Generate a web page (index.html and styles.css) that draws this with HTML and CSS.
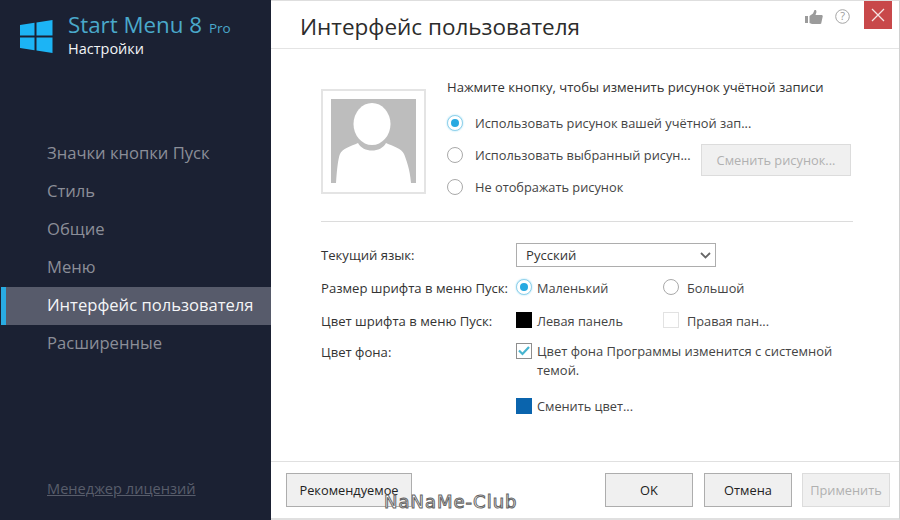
FILE: index.html
```html
<!DOCTYPE html>
<html lang="ru">
<head>
<meta charset="utf-8">
<title>Start Menu 8</title>
<link rel="stylesheet" href="styles.css">
</head>
<body>
<div class="app">
  <aside class="side">
    <div class="brand">
      <svg class="logo" width="33" height="33" viewBox="0 0 33 33"><path fill="#1cb4f5" d="M0 5 14.500 2.800V15.600H0ZM16.500 2.500 32.500 0V15.600H16.500ZM0 17.600H14.500V30.300L0 28.100ZM16.500 17.600H32.500V33L16.500 30.600Z"/></svg>
      <div class="brand-text">
        <div class="product">Start Menu 8<span class="pro">Pro</span></div>
        <div class="subtitle">Настройки</div>
      </div>
    </div>
    <nav class="nav">
      <div class="nav-item">Значки кнопки Пуск</div>
      <div class="nav-item">Стиль</div>
      <div class="nav-item">Общие</div>
      <div class="nav-item">Меню</div>
      <div class="nav-item active">Интерфейс пользователя</div>
      <div class="nav-item">Расширенные</div>
    </nav>
    <a class="license">Менеджер лицензий</a>
  </aside>
  <main class="main">
    <header class="head">
      <h1 class="title">Интерфейс пользователя</h1>
      <div class="tools">
        <svg width="18" height="14" viewBox="0 0 18 14"><path fill="#9b9b9b" d="M0 6h3v7H0ZM4.500 6 8 3.500 9.500 0h1.500l.5 2-1 3H17l.8 1-1.600 7.500-1 .5H7l-2.500-1Z"/></svg>
        <svg class="help" width="15" height="15" viewBox="0 0 15 15"><circle cx="7.500" cy="7.500" r="6.800" fill="none" stroke="#a5a5a5"/><text x="7.500" y="11.300" text-anchor="middle" class="help-mark">?</text></svg>
        <div class="close"><svg width="14" height="14" viewBox="0 0 14 14"><path stroke="#f6e4e4" stroke-width="1.300" d="M1 1 13 13M13 1 1 13"/></svg></div>
      </div>
    </header>
    <div class="body">
      <section class="picture">
        <div class="avatar">
          <svg width="85" height="84" viewBox="0 0 85 84"><rect width="85" height="84" fill="#bdbdbd"/><ellipse cx="41" cy="25" rx="18.500" ry="21" fill="#fff"/><path fill="#fff" d="M5 84C6 70 7 60 9 55 11 50 20 47 27 44 32 54 50 54 55 44 62 47 71 50 73 55 75 60 79 70 80 84Z"/></svg>
        </div>
        <div class="picture-opts">
          <p class="hint">Нажмите кнопку, чтобы изменить рисунок учётной записи</p>
          <div class="opt"><span class="radio on"></span>Использовать рисунок вашей учётной зап...</div>
          <div class="opt"><span class="radio"></span>Использовать выбранный рисун...<button class="btn change" disabled>Сменить рисунок...</button></div>
          <div class="opt"><span class="radio"></span>Не отображать рисунок</div>
        </div>
      </section>
      <hr class="sep">
      <section class="form">
        <div class="lbl row-lang">Текущий язык:</div>
        <div class="select row-lang"><span>Русский</span><svg width="11" height="7" viewBox="0 0 11 7"><path fill="none" stroke="#666" stroke-width="1.800" d="M1 1 5.500 5.500 10 1"/></svg></div>
        <div class="lbl row-size">Размер шрифта в меню Пуск:</div>
        <div class="pair row-size">
          <div class="cell"><span class="radio on"></span>Маленький</div>
          <div class="cell"><span class="radio"></span>Большой</div>
        </div>
        <div class="lbl row-color">Цвет шрифта в меню Пуск:</div>
        <div class="pair row-color">
          <div class="cell"><span class="swatch black"></span>Левая панель</div>
          <div class="cell"><span class="swatch blank"></span>Правая пан...</div>
        </div>
        <div class="lbl row-bg">Цвет фона:</div>
        <div class="bg row-bg">
          <div class="check-row">
            <span class="check"><svg width="12" height="10" viewBox="0 0 12 10"><path fill="none" stroke="#47b4cf" stroke-width="2.200" d="M1 4.500 4.500 8 11 1"/></svg></span>
            <span class="check-text">Цвет фона Программы изменится с системной темой.</span>
          </div>
          <div class="cell change-color"><span class="swatch blue"></span>Сменить цвет...</div>
        </div>
      </section>
    </div>
    <footer class="foot">
      <button class="btn recommended">Рекомендуемое</button>
      <div class="actions">
        <button class="btn">OK</button>
        <button class="btn">Отмена</button>
        <button class="btn" disabled>Применить</button>
      </div>
    </footer>
  </main>
  <div class="mark">NaNaMe-Club</div>
</div>
</body>
</html>
```
FILE: styles.css
```css
* { box-sizing: border-box; }
html, body { margin: 0; padding: 0; }
body { font-family: "Open Sans", "Noto Sans", sans-serif; background: #fff; color: #333; }
.app { position: relative; display: flex; width: 900px; height: 520px; overflow: hidden; }

.side { width: 271px; flex: none; background: #1b2133; display: flex; flex-direction: column; }
.brand { display: flex; gap: 15px; padding: 9px 0 0 20px; height: 135px; }
.logo { margin-top: 11px; }
.product { font-size: 22.300px; line-height: 31px; color: #4aa9cb; white-space: nowrap; }
.pro { font-size: 13.500px; margin-left: 7px; color: #4aa9cb; }
.subtitle { font-size: 14.500px; line-height: 14px; margin-top: -2px; color: #f2f4f6; }
.nav { display: flex; flex-direction: column; }
.nav-item { height: 38px; line-height: 35px; padding-left: 47px; font-size: 16.600px; color: #8b8e98; white-space: nowrap; }
.nav-item.active { margin-left: 1px; padding-left: 41px; border-left: 5px solid #29abe2; background: #575b6b; color: #f4f5f7; }
.license { margin-top: auto; margin-bottom: 21px; padding-left: 47px; font-size: 14.600px; line-height: 22px; color: #585d6b; text-decoration: underline; }

.main { flex: 1; display: flex; flex-direction: column; border-top: 1px solid #dedede; border-right: 1px solid #d0d0d0; border-bottom: 2px solid #e0e0e0; }
.head { height: 48px; flex: none; display: flex; justify-content: space-between; align-items: flex-start; padding-left: 29px; border-bottom: 1px solid #e4e4e4; }
.title { margin: 7px 0 0; font-size: 22.500px; line-height: 38px; font-weight: 400; color: #2c2c2c; }
.tools { display: flex; align-items: flex-start; padding-right: 7px; }
.tools svg { flex: none; }
.tools > svg:first-child { margin-top: 9px; }
.help { margin: 8px 14px 0 12px; }
.help-mark { font-size: 11px; fill: #9a9a9a; font-family: "Open Sans", sans-serif; }
.close { width: 28px; height: 28px; background: #c8484a; display: flex; align-items: center; justify-content: center; }

.body { flex: 1; padding: 0 46px 0 50px; }
.picture { display: flex; gap: 21px; padding-top: 26px; height: 172px; }
.avatar { width: 105px; height: 105px; margin-top: 14px; flex: none; border: 2px solid #e4e4e4; padding: 8px 0 0 8px; }
.avatar svg { display: block; }
.picture-opts { flex: 1; min-width: 0; }
.hint { margin: 0 0 8px; font-size: 13.070px; line-height: 24px; color: #333; white-space: nowrap; }
.opt { position: relative; display: flex; align-items: center; height: 32px; font-size: 12.800px; color: #444; white-space: nowrap; }
.radio { width: 16px; height: 16px; flex: none; margin-right: 12px; border: 1px solid #a9a9a9; border-radius: 50%; background: #fff; display: inline-flex; align-items: center; justify-content: center; }
.radio.on { border-color: #8fd0ea; box-shadow: 0 0 2px #9adcf5; }
.radio.on::after { content: ""; width: 8px; height: 8px; border-radius: 50%; background: #27a9e1; }
.btn { font-family: inherit; font-size: 12.800px; color: #222; background: #f0f0f0; border: 1px solid #adadad; width: 88px; height: 34px; padding: 0; }
.btn:disabled { color: #b0b0b0; border-color: #dcdcdc; background: #f0f0f0; }
.change { position: absolute; left: 254px; top: 5px; width: 150px; height: 32px; }
.sep { margin: 0; border: 0; border-top: 1px solid #dcdcdc; }

.form { display: grid; grid-template-columns: 195px 1fr; grid-template-rows: 24px 24px 24px auto; row-gap: 9px; padding-top: 21px; font-size: 13.100px; }
.lbl { white-space: nowrap; color: #333; display: flex; align-items: center; }
.select { width: 200px; height: 24px; border: 1px solid #adadad; display: flex; align-items: center; justify-content: space-between; padding: 0 4px 0 9px; color: #333; }
.row-lang { grid-row: 1; }
.row-size { grid-row: 2; }
.row-color { grid-row: 3; }
.row-bg { grid-row: 4; }
.lbl.row-bg { align-self: start; height: 19px; }
.pair { display: grid; grid-template-columns: 147px 1fr; }
.cell { display: flex; align-items: center; gap: 5px; white-space: nowrap; color: #444; font-size: 12.750px; }
.cell:last-child { gap: 8px; }
.change-color.cell { gap: 5px; margin-top: 17px; }
.cell .radio { margin-right: 0; margin-bottom: 2px; }
.swatch { width: 16px; height: 16px; flex: none; margin-bottom: 2px; }
.black { background: #000; }
.blank { background: #fff; border: 1px solid #e2e2e2; }
.blue { background: #0a64ad; margin-bottom: 0; }
.check-row { display: flex; gap: 5px; }
.check { width: 16px; height: 16px; flex: none; margin-top: 1px; border: 1px solid #8e8e8e; display: flex; align-items: center; justify-content: center; }
.check-text { line-height: 19px; color: #444; width: 310px; font-size: 12.950px; }

.foot { height: 57px; flex: none; display: flex; justify-content: space-between; padding: 11px 9px 0 15px; border-top: 1px solid #e0e0e0; }
.recommended { width: 126px; }
.actions { display: flex; gap: 11px; }
.actions .btn:last-child { margin-left: -1px; }
.mark { position: absolute; left: 384px; top: 490px; font-family: "DejaVu Sans", sans-serif; font-size: 18px; line-height: 24px; color: #fff; -webkit-text-stroke: 1px #666; letter-spacing: 1px; }
```
